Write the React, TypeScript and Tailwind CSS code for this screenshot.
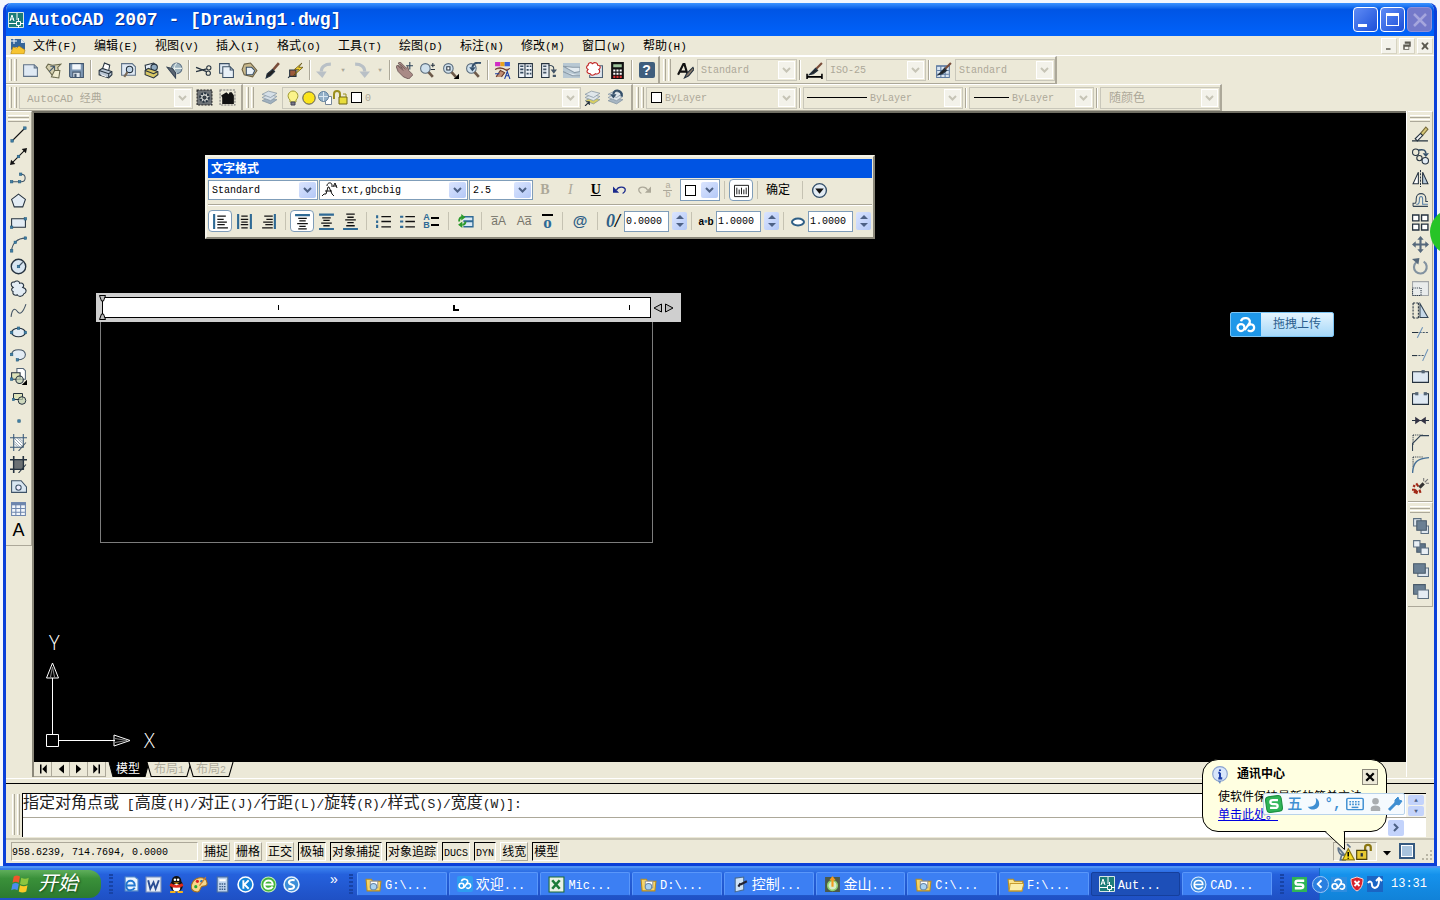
import type { ReactNode } from "react"

type Item = { label: string; icon: ReactNode } | "sep"

// Chinese runs keep the parent's size, latin runs get a smaller monospace size
function Mixed({ text, latin = "text-[10px]" }: { text: string; latin?: string }) {
  return (
    <>
      {text.split(/([\x20-\x7e]+)/).map((part, i) =>
        i % 2 ? (
          <span key={i} className={latin}>
            {part}
          </span>
        ) : (
          part
        )
      )}
    </>
  )
}

function Svg({ children, className = "size-[17px]" }: { children: ReactNode; className?: string }) {
  return (
    <svg viewBox="0 0 16 16" className={`shrink-0 ${className}`} fill="none" stroke="#25323f" strokeWidth="1" aria-hidden="true">
      {children}
    </svg>
  )
}

function Dot({ x, y }: { x: number; y: number }) {
  return <rect x={x - 1.2} y={y - 1.2} width="2.4" height="2.4" fill="#3f7fa6" stroke="#245a7c" strokeWidth=".5" />
}

function Tools({ items, vertical = false }: { items: Item[]; vertical?: boolean }) {
  return (
    <>
      {items.map((item, i) =>
        item === "sep" ? (
          <Sep key={i} />
        ) : (
          <button
            key={i}
            aria-label={item.label}
            className={vertical ? "flex h-[22px] w-full items-center justify-center" : "flex h-6 w-[23px] items-center justify-center"}
          >
            {item.icon}
          </button>
        )
      )}
    </>
  )
}

function Sep() {
  return <span className="mx-[2px] h-5 w-[2px] shrink-0 border-l border-[#aca899] bg-white" />
}

function Grip() {
  return (
    <span className="mx-[2px] flex h-full shrink-0 gap-[2px] py-[2px]">
      <span className="w-[3px] border-r border-l border-r-[#aca899] border-l-white" />
      <span className="w-[3px] border-r border-l border-r-[#aca899] border-l-white" />
    </span>
  )
}

function GripH() {
  return (
    <span className="mx-[2px] mt-[3px] mb-px flex flex-col gap-px">
      <span className="h-[3px] border-t border-b border-t-white border-b-[#aca899]" />
      <span className="h-[3px] border-t border-b border-t-white border-b-[#aca899]" />
    </span>
  )
}

function Bar({ children }: { children: ReactNode }) {
  return (
    <div className="flex h-full shrink-0 items-center border-t border-r-2 border-b border-t-white border-r-[#aca899] border-b-[#aca899] pl-px">
      {children}
    </div>
  )
}

function Arrow({ on = false }: { on?: boolean }) {
  return (
    <span
      className={
        on
          ? "pointer-events-none flex h-4 w-[17px] shrink-0 items-center justify-center rounded-xs bg-linear-to-br from-[#dbe5fe] to-[#b3c8f7]"
          : "pointer-events-none flex h-[18px] w-[17px] shrink-0 items-center justify-center border border-white bg-[#f3f2ea]"
      }
    >
      <svg viewBox="0 0 9 6" className="h-[6px] w-[9px]" fill="none" stroke={on ? "#4d6185" : "#c6c4b6"} strokeWidth="2">
        <path d="M1 1l3.500 3.500L8 1" />
      </svg>
    </span>
  )
}

function Combo({ label, value, icon, width, on = false, font = "text-[10px]" }: { label: string; value: string; icon?: ReactNode; width: string; on?: boolean; font?: string }) {
  return (
    <label
      className={`flex shrink-0 items-center border ${on ? "h-5 border-[#7f9db9] bg-white pr-px text-black" : "h-[22px] border-[#c9c7ba] pr-px text-[#aca899]"} ${width}`}
    >
      {icon}
      <select aria-label={label} className={`min-w-0 flex-1 appearance-none bg-transparent pt-[2px] pl-[3px] leading-4 outline-none ${font}`}>
        <option>{value}</option>
      </select>
      <Arrow on={on} />
    </label>
  )
}

const swatch = <span className="ml-1 size-[11px] shrink-0 border border-black bg-white" />

const printer = (
  <>
    <path d="M5 7l2-6 5 2-1 5" fill="#fff" />
    <path d="M2 8l3-2 9 3v3l-3 3-9-3z" fill="#b9c6d4" />
    <path d="M2 8l9 3 3-2M11 11v3" />
    <path d="M4 12l5 2" stroke="#fff" />
  </>
)

const standardTools: Item[] = [
  { label: "新建", icon: <Svg><path d="M1.500 2.500h10l3 3v8h-13z" fill="#dfe9f3" stroke="#5f7286" /><path d="M11.500 2.500v3h3" stroke="#5f7286" /></Svg> },
  { label: "打开", icon: <Svg><path d="M1 5l2-3 4 1 8-1-3 3 1 5-5 4z" fill="#d5cfae" stroke="#6b6a4e" /><path d="M4 9l5-5M5 4h4v4" stroke="#44586c" /><path d="M6 14l3-6 5 0-1 7z" fill="#f0eccf" stroke="#6b6a4e" /></Svg> },
  { label: "保存", icon: <Svg><path d="M1.500 1.500h13v13h-12l-1-1z" fill="#7e98b4" stroke="#41566e" /><path d="M4 2h8v5H4z" fill="#f3f7fb" stroke="none" /><path d="M4.500 9.500h7v5h-7z" fill="#dfe7ef" stroke="#41566e" /><path d="M6 11h2v3H6z" fill="#41566e" stroke="none" /></Svg> },
  "sep",
  { label: "打印", icon: <Svg>{printer}</Svg> },
  { label: "打印预览", icon: <Svg><path d="M1.500 1.500h10l3 3v8h-13z" fill="#dfe9f3" stroke="#5f7286" /><circle cx="9" cy="7" r="3" fill="#c0d4e6" /><path d="M7 9.500L4 14" stroke="#7a6a58" strokeWidth="2" /></Svg> },
  { label: "发布", icon: <Svg><path d="M2 3l8-2 3 3-2 4-8 2z" fill="#e6eef5" /><circle cx="10.500" cy="5" r="3" fill="#8fa9bf" /><path d="M2 8l3-2 9 3v3l-4 3-8-3z" fill="#d8c766" /><path d="M2 8l8 3 4-2" /></Svg> },
  { label: "三维 DWF", icon: <Svg><circle cx="10" cy="6" r="5" fill="#9fb4bf" stroke="#5f7286" /><path d="M10 1c-3 3-3 7 0 10M5 6h10" stroke="#e8f0ee" /><path d="M1 5l5 1 3 4v5z" fill="#5b6673" stroke="#394656" /></Svg> },
  "sep",
  { label: "剪切", icon: <Svg><path d="M1 5l10 4M1 9l10-2.500" strokeWidth="1.300" /><circle cx="13" cy="5.500" r="2" /><circle cx="12.500" cy="10.500" r="2" /></Svg> },
  { label: "复制", icon: <Svg><path d="M1.500 1.500h9v9h-9z" fill="#dfe9f3" stroke="#3d5166" /><path d="M4.500 4.500h7l3 3v7h-10z" fill="#e9f1f8" stroke="#3d5166" /><path d="M11.500 4.500v3h3" stroke="#3d5166" /></Svg> },
  { label: "粘贴", icon: <Svg><path d="M3 2l6-1 6 7-4 6-8-2-2-5z" fill="#c9b98d" stroke="#6e6244" /><path d="M5 5h5l3 3-2 4H5z" fill="#e9f1f8" stroke="#3d5166" /></Svg> },
  { label: "特性匹配", icon: <Svg><path d="M14 1L8 8" stroke="#7a4d3a" strokeWidth="2.500" /><path d="M8 7l2 2-4 4-4 2 1-4z" fill="#222" /></Svg> },
  { label: "块编辑器", icon: <Svg><path d="M2.500 7.500h6v6h-6z" fill="#9c5a3c" /><path d="M14 1L7 7h4l-5 6 9-8h-4z" fill="#f5d432" stroke="#5c4c10" strokeWidth=".7" /><path d="M1 15l2-2" /></Svg> },
  "sep",
]

const undoIcon = <Svg><path d="M14 2C8 2 5 5 5 9" stroke="#b9c0c6" strokeWidth="3" /><path d="M0 9h10l-4 6z" fill="#b9c0c6" stroke="none" /></Svg>
const redoIcon = <Svg><path d="M2 2c6 0 9 3 9 7" stroke="#b9c0c6" strokeWidth="3" /><path d="M6 9h10l-5 6z" fill="#b9c0c6" stroke="none" /></Svg>
const lens = <><circle cx="6" cy="6" r="4.500" fill="#cfe0ec" stroke="#5a6c7d" /><path d="M9 9.500l4 4.500" stroke="#6d5a4a" strokeWidth="2.500" /></>

const viewTools: Item[] = [
  "sep",
  { label: "平移", icon: <Svg><path d="M0 4l2-1 4 3-4-5 2-1 6 6 1-2 1 4 4 4-4 4-5-2-5-5z" fill="#a98a86" stroke="#5f4a4a" strokeWidth=".7" /><path d="M2 4l5 4M4 2l5 5" stroke="#6f5553" strokeWidth=".8" /><path d="M13 0v7M9.500 3.500h6.500" stroke="#2c4257" /></Svg> },
  { label: "实时缩放", icon: <Svg>{lens}<path d="M13 1v4M11 3h4M11 7h4" /></Svg> },
  { label: "窗口缩放", icon: <Svg>{lens}<path d="M4.500 4.500h3v3h-3z" fill="#fff" /><path d="M16 11v5h-5z" fill="#000" stroke="none" /></Svg> },
  { label: "缩放上一个", icon: <Svg>{lens}<path d="M15 1C10 0 7 2 7 5" stroke="#35506a" strokeWidth="2" /><path d="M4 5h6l-3 4z" fill="#35506a" stroke="none" /></Svg> },
  "sep",
  { label: "特性", icon: <Svg><path d="M1 0h5v4H1z" fill="#d22cc4" stroke="none" /><path d="M6 0h4v4H6z" fill="#e9a31c" stroke="none" /><path d="M10 0h5v4h-5z" fill="#3d62d8" stroke="none" /><path d="M1 7c3-2 7-2 11 1l3-2M2 14l4-6 4 2-3 4" fill="#c08e72" stroke="#6b3b2c" /><path d="M10 16l2.500-7L15 16M11 13h3M1 11h4" stroke="#1a3da0" /></Svg> },
  { label: "设计中心", icon: <Svg><path d="M1.500 1.500h13v13h-13zM7.500 2v12" fill="#edf2f7" /><path d="M3 4h3M3 7h3M3 10h3M9 4h2M12 4h1.500M9 7.500h2M12 7.500h1.500M9 11h2M12 11h1.500" strokeWidth="1.600" stroke="#34495e" /></Svg> },
  { label: "工具选项板", icon: <Svg><path d="M1.500 1.500h7v13h-7z" fill="#e7edf3" /><path d="M3 4h3M3 7h3M3 10h3" strokeWidth="1.600" stroke="#456" /><path d="M8 3c5 0 5 2 5 5" stroke="#345" /><path d="M10 7h6l-3 4zM12 12h3v2h-3z" fill="#456" stroke="none" /></Svg> },
  { label: "图纸集管理器", icon: <Svg><path d="M0 1h16v14H0z" fill="#b8c8d3" stroke="none" /><path d="M0 4l11 6 5-1V5H9zM0 9l9 4h7" fill="#e3ebf0" stroke="#8b9ba8" /></Svg> },
  { label: "标记集管理器", icon: <Svg><path d="M13 3.500h2.500v11h-12V12" fill="#dde6ee" stroke="#4d6175" /><path d="M2 3c0-3 4-3 4-1 1-2 5-2 5 1 3 0 3 3 1 4 2 2 0 5-3 4-2 2-4 2-5 0-3 0-4-2-2-4-2-1-2-3 0-4z" fill="#fff" stroke="#c02020" /></Svg> },
  { label: "快速计算器", icon: <Svg><path d="M2 0h12v16H2z" fill="#111" stroke="none" /><path d="M4 2h8v3H4z" fill="#9fc49b" stroke="none" /><path d="M4 8h8M4 11h8" stroke="#fff" strokeDasharray="2 1" strokeWidth="2" /><path d="M4 14h8" stroke="#d33" strokeDasharray="2 1" strokeWidth="2" /></Svg> },
  "sep",
  { label: "帮助", icon: <span className="flex size-4 items-center justify-center rounded-xs bg-[#3f5e7d] font-['Liberation_Sans',sans-serif] text-sm leading-4 font-bold text-white">?</span> },
]

const brush = <><path d="M15 1L9 7" stroke="#7a4d3a" strokeWidth="2" /><path d="M9 6l2 2-4 3-4 1 3-3z" fill="#222" /></>
const sheets = (top: string, bottom: string) => (
  <>
    <path d="M1 11l6-3 8 2-6 4z" fill={bottom} stroke="#8494a2" strokeWidth=".7" />
    <path d="M1 8l6-3 8 2-6 4z" fill={top} stroke="#8494a2" strokeWidth=".7" />
    <path d="M1 5l6-3 8 2-6 4z" fill={top} stroke="#8494a2" strokeWidth=".7" />
  </>
)

const drawTools: Item[] = [
  { label: "直线", icon: <Svg><path d="M2 14L14 2" strokeWidth="1.300" stroke="#111" /><Dot x={2} y={14} /><Dot x={14} y={2} /></Svg> },
  { label: "构造线", icon: <Svg><path d="M2 14L14 2" stroke="#111" /><path d="M0 16l1-5 4 4zM16 0l-1 5-4-4z" fill="#111" stroke="none" /><Dot x={8} y={8} /></Svg> },
  { label: "多段线", icon: <Svg><path d="M1.500 11h9c5 0 5-7 0-7" stroke="#456" /><Dot x={1.500} y={11} /><Dot x={9} y={11} /><Dot x={10} y={4} /></Svg> },
  { label: "正多边形", icon: <Svg><path d="M8 2l6.500 5-2.500 7H4L1.500 7z" fill="#e3ecf4" /></Svg> },
  { label: "矩形", icon: <Svg><path d="M1.500 4.500h13v8h-13z" fill="#e3ecf4" /><Dot x={1.500} y={12.500} /><Dot x={14.500} y={4.500} /></Svg> },
  { label: "圆弧", icon: <Svg><path d="M1.500 14C2 7 7 2 14.500 2" stroke="#456" /><Dot x={1.500} y={14} /><Dot x={5} y={6} /><Dot x={14.500} y={2} /></Svg> },
  { label: "圆", icon: <Svg><circle cx="8" cy="8" r="6.800" fill="#d9e6f1" strokeWidth="1.300" /><path d="M8 8l4-4" stroke="#456" /><Dot x={8} y={8} /></Svg> },
  { label: "修订云线", icon: <Svg><path d="M3 7C0 5 1 1 4 2c2-2 5-1 5 1 3-1 5 2 3 4 4 1 4 5 1 6-1 3-5 3-6 1-3 1-5-1-4-3-2-1-2-3 0-4z" fill="#e3ecf4" /></Svg> },
  { label: "样条曲线", icon: <Svg><path d="M1 14c1-9 4-8 6-5s5 2 8-7" stroke="#456" /></Svg> },
  { label: "椭圆", icon: <Svg><ellipse cx="8" cy="8" rx="6.500" ry="4" fill="#e3ecf4" /><Dot x={1.500} y={8} /><Dot x={8} y={4} /><Dot x={14.500} y={8} /></Svg> },
  { label: "椭圆弧", icon: <Svg><path d="M1.500 8C2 2 14 2 14.500 8c0 3-3 5-7 5" fill="#e3ecf4" stroke="#456" /><Dot x={1.500} y={8} /><Dot x={7} y={13} /></Svg> },
  { label: "插入块", icon: <Svg><path d="M6.500.5h6l2 2v8h-8z" fill="#fff" stroke="#567" /><path d="M1.500 4.500h8v6h-8z" fill="#dde2b8" /><circle cx="9" cy="11" r="3.500" fill="#c3d1b4" fillOpacity=".7" /><path d="M16 11v5h-5z" fill="#000" stroke="none" /><Dot x={1.500} y={10.500} /></Svg> },
  { label: "创建块", icon: <Svg className="size-4"><path d="M2.500 3.500h9v6h-9z" fill="#dde2b8" /><circle cx="11" cy="10.500" r="3.800" fill="#c3d1b4" fillOpacity=".7" /><Dot x={2.500} y={9.500} /></Svg> },
  { label: "点", icon: <Svg><Dot x={8.500} y={8.500} /></Svg> },
  { label: "图案填充", icon: <Svg><path d="M4 4h8v8H4z" fill="#fff" stroke="none" /><path d="M4 4l8 8M4 7l5 5M7 4l5 5M9 4l3 3M4 9l3 3" stroke="#789" strokeWidth=".7" /><path d="M0 3.500h16M0 12.500h13M3.500 0v16M12.500 0v13" stroke="#3a5a7a" /><path d="M15 8l-7 8" stroke="#456" /></Svg> },
  { label: "渐变色", icon: <Svg><path d="M4 4h8v8H4z" fill="#6b7073" stroke="none" /><path d="M0 3.500h16M0 12.500h13M3.500 0v16M12.500 0v13" strokeWidth="1.500" /><path d="M15 8l-7 8" /></Svg> },
  { label: "面域", icon: <Svg><path d="M1.500 2.500h9l5 6v5h-14z" fill="#d9e6f1" stroke="#3e5267" /><circle cx="8" cy="9" r="2.500" fill="#eef" stroke="#3e5267" /></Svg> },
  { label: "表格", icon: <Svg><path d="M1.500 2.500h13v12h-13z" fill="#f2f6fb" stroke="#6e86ad" /><path d="M1 3.500h14" stroke="#6e86ad" strokeWidth="3" /><path d="M2 8h12M2 11.500h12M5.500 4v10M10 4v10" stroke="#6e86ad" /></Svg> },
  { label: "多行文字", icon: <span className="font-['Liberation_Sans',sans-serif] text-lg leading-5 text-black">A</span> },
]

const modifyTools: Item[] = [
  { label: "删除", icon: <Svg><path d="M0 14h15" /><path d="M8 7l5-6 2 2-5 6z" fill="#d8c878" stroke="#776b3a" /><path d="M3 12l5-5 2 2-5 5z" fill="#f3f3f3" /></Svg> },
  { label: "复制对象", icon: <Svg><circle cx="3.500" cy="4" r="3" /><circle cx="7" cy="9.500" r="2.500" /><circle cx="12.500" cy="12" r="3" fill="#e3ecf4" /><path d="M6 2c5-1 7 0 7 3" stroke="#35506a" strokeWidth="1.500" /><path d="M10 5h6l-3 3.500z" fill="#35506a" stroke="none" /></Svg> },
  { label: "镜像", icon: <Svg><path d="M6 2v11H1z" fill="#fff" /><path d="M10 2v11h5z" fill="#b8cbdc" /><path d="M8 0v16" strokeDasharray="2 1" /></Svg> },
  { label: "偏移", icon: <Svg><path d="M1 13.500h14M1 13.500v-3h2C4 10 4 8 4 6c0-6 9-6 9 0v3h2" stroke="#345" /><path d="M4 11.500h1c2 0 2-2 2-5 0-3 3-3 3 0v5h5" stroke="#567fa6" /></Svg> },
  { label: "阵列", icon: <Svg><path d="M.5 1h6v5.500h-6zM9 1h6v5.500H9zM.5 9.500h6V15h-6zM9 9.500h6V15H9z" fill="#fff" strokeWidth="1.300" /></Svg> },
  { label: "移动", icon: <Svg><path d="M8 2v12M2 8h12" stroke="#55687b" strokeWidth="2" /><path d="M8 0l3 3.500H5zM8 16l3-3.500H5zM0 8l3.500-3v6zM16 8l-3.500-3v6z" fill="#55687b" stroke="none" /></Svg> },
  { label: "旋转", icon: <Svg><path d="M4 4a6 6 0 1 0 7-.5" stroke="#8292a0" strokeWidth="2" /><path d="M0 1l7-1-1 6z" fill="#55687b" stroke="none" /></Svg> },
  { label: "缩放", icon: <Svg><path d="M.5 1.500h15v13H.5z" fill="#e9ecec" stroke="#a2a6a8" /><path d="M.5 7.500h8v7h-8z" strokeDasharray="1 1" /></Svg> },
  { label: "拉伸", icon: <Svg><path d="M1 1v14M6 1v14M1 1h5M1 15h5" strokeDasharray="2 1" /><path d="M7.500 1.500L15 14.500H7.500z" fill="#c6d8e8" stroke="#345" /></Svg> },
  { label: "修剪", icon: <Svg><path d="M0 8h6" /><path d="M7 8h9" strokeDasharray="2 1" stroke="#456" /><path d="M10 3L5 13" stroke="#6c93ba" /></Svg> },
  { label: "延伸", icon: <Svg><path d="M0 9h5" /><path d="M6 9h6" strokeDasharray="2 1" stroke="#456" /><path d="M15 3l-5 11" stroke="#6c93ba" /></Svg> },
  { label: "打断于点", icon: <Svg><path d="M.5 3.500h15v10H.5z" fill="#dfe9f3" /><rect x="9" y="2" width="3" height="3" fill="#567" stroke="none" /></Svg> },
  { label: "打断", icon: <Svg><path d="M4 3.500H.5v10h15v-10H12" fill="#dfe9f3" /><rect x="3" y="2" width="3" height="3" fill="#567" stroke="none" /><rect x="11" y="2" width="3" height="3" fill="#567" stroke="none" /></Svg> },
  { label: "合并", icon: <Svg><path d="M0 8h16" /><path d="M3 4.500L8 8l-5 3.500zM13 4.500L8 8l5 3.500z" fill="#334" stroke="none" /></Svg> },
  { label: "倒角", icon: <Svg><path d="M1 1h9M1 1v9" strokeDasharray="1 1" /><path d="M.5 16V9L8 1.500h8" stroke="#345" /></Svg> },
  { label: "圆角", icon: <Svg><path d="M1 1h9M1 1v9" strokeDasharray="1 1" /><path d="M.5 16C1 6 5 2 16 1.500" stroke="#456f96" strokeWidth="1.300" /></Svg> },
  { label: "分解", icon: <Svg><path d="M1 7l2 1M0 11h3M4 15l1-3M8 14l-1-3M4 5l2 3M2 14l2-3" stroke="#a12a18" strokeWidth="2" /><path d="M7 9l4-4" stroke="#333" strokeWidth="3" /><path d="M12 4l3-3M13 5h3M11 3V0" stroke="#777" /></Svg> },
]

const orderTools: Item[] = [
  { label: "前置", icon: <Svg><path d="M1.500 1.500h7v7h-7zM8.500 8.500h7v7h-7z" fill="#dfe7ef" stroke="#5d6f80" /><path d="M4.500 3.500h9v9h-9z" fill="#6a7f93" stroke="#4a5b6b" /></Svg> },
  { label: "后置", icon: <Svg><path d="M4.500 4.500h8v8h-8z" fill="#5f7488" stroke="#4a5b6b" /><path d="M1.500 1.500h6v6h-6zM8.500 8.500h7v6h-7z" fill="#e9eff5" stroke="#5d6f80" /></Svg> },
  { label: "置于对象之上", icon: <Svg><path d="M5.500 6.500h10v8h-10z" fill="#dfe7ef" stroke="#5d6f80" /><path d="M1.500 2.500h11v9h-11z" fill="#6a7f93" stroke="#4a5b6b" /></Svg> },
  { label: "置于对象之下", icon: <Svg><path d="M1.500 1.500h11v9h-11z" fill="#6a7f93" stroke="#4a5b6b" /><path d="M5.500 6.500h10v8h-10z" fill="#e6edf4" stroke="#5d6f80" /></Svg> },
]

const menus = ["文件(F)", "编辑(E)", "视图(V)", "插入(I)", "格式(O)", "工具(T)", "绘图(D)", "标注(N)", "修改(M)", "窗口(W)", "帮助(H)"]

function CadLogo({ className = "size-4" }: { className?: string }) {
  return (
    <Svg className={className}>
      <path d="M.5.5h15v15H.5z" fill="#1c7d78" stroke="#d5e6e4" />
      <path d="M2 9l2-6 2 6M3 7h3M9 1v7M1 11.500h7M12 11.500h4M10.500 13v3" stroke="#fff" />
      <path d="M8.500 9.500h4v4h-4zM10.500 6v3" stroke="#fff" fill="#1c7d78" />
    </Svg>
  )
}

function TitleBar() {
  return (
    <header className="flex h-[33px] items-center justify-between bg-linear-to-b from-[#3b93ff] via-[#0055e5] via-20% to-[#0062fb] px-[2px]">
      <div className="flex items-center gap-1">
        <CadLogo />
        <h1 className="pt-px font-['Liberation_Mono',monospace] text-[18px] leading-6 font-bold whitespace-pre text-white [text-shadow:1px_1px_#0a2f90]">AutoCAD 2007 - [Drawing1.dwg]</h1>
      </div>
      <div className="flex gap-[2px]">
        <button aria-label="最小化" className="flex size-[25px] items-end rounded-sm border border-white bg-linear-to-br from-[#5f8bf5] to-[#1c4ed8] p-1">
          <span className="h-[3px] w-[9px] bg-white" />
        </button>
        <button aria-label="最大化" className="flex size-[25px] items-center justify-center rounded-sm border border-white bg-linear-to-br from-[#5f8bf5] to-[#1c4ed8]">
          <span className="size-[13px] border border-t-[3px] border-white" />
        </button>
        <button aria-label="关闭" className="flex size-[25px] items-center justify-center rounded-sm border border-[#8f8fd6] bg-[#7479c9]">
          <Svg className="size-4"><path d="M2 2l12 12M14 2L2 14" stroke="#a5a6dd" strokeWidth="2.500" /></Svg>
        </button>
      </div>
    </header>
  )
}

function MenuBar() {
  return (
    <nav className="flex h-5 items-center justify-between border-b border-white pl-1">
      <div className="flex items-center">
        <Svg className="mr-1 size-4">
          <path d="M1 1h10l4 4v7L6 9 1 12z" fill="#35669b" stroke="none" />
          <path d="M11 1v4h4z" fill="#dfe9f3" stroke="none" />
          <path d="M1 15l2-6 4 1 2-2 6 4-1 4H1z" fill="#f7c531" stroke="#a77a12" strokeWidth=".6" />
          <path d="M4 0v6M1 3h6" stroke="#fff" />
        </Svg>
        {menus.map((m) => (
          <button key={m} className="w-[61px] pt-[2px] pl-[3px] text-left text-xs leading-[18px] whitespace-nowrap text-black">
            <Mixed text={m} latin="text-[11px]" />
          </button>
        ))}
      </div>
      <div className="flex gap-[2px] pr-px">
        {["M4 11h6v2H4z", "M5 2h8v7h-2V5H5zM3 6h8v7H3zM5 9v3h5V9z", "M3 4l2-1 3 3 3-3 2 1-3 4 3 4-2 1-3-3-3 3-2-1 3-4z"].map((d, i) => (
          <button key={i} aria-label={["最小化图形", "还原图形", "关闭图形"][i]} className="flex size-4 items-center justify-center border border-t-white border-r-[#d6d3c2] border-b-[#d6d3c2] border-l-white bg-[#f3f2ea]">
            <svg viewBox="0 0 16 16" className="size-3" fill="#5c5a50" fillRule="evenodd"><path d={d} /></svg>
          </button>
        ))}
      </div>
    </nav>
  )
}

function TopToolbars() {
  return (
    <>
      <div className="flex h-7">
        <Bar>
          <Grip />
          <Tools items={standardTools} />
          <Tools items={[{ label: "放弃", icon: undoIcon }]} />
          <button aria-label="放弃列表" className="w-[14px] text-[6px] text-[#aca899]">▼</button>
          <Tools items={[{ label: "重做", icon: redoIcon }]} />
          <button aria-label="重做列表" className="w-[14px] text-[6px] text-[#aca899]">▼</button>
          <Tools items={viewTools} />
        </Bar>
        <Bar>
          <Grip />
          <button aria-label="文字样式" className="flex w-6 justify-center"><Svg><path d="M1 12L6 2h1l3 10M3 9h6" strokeWidth="2" stroke="#111" /><path d="M15 5l-6 6-2 4 4-2 5-6z" fill="#8b7b6b" /></Svg></button>
          <Combo label="文字样式" value="Standard" width="w-[100px]" />
          <Sep />
          <button aria-label="标注样式" className="flex w-[23px] justify-center"><Svg>{brush}<path d="M1 14h14M1 11v5M15 11v5" stroke="#000" strokeWidth="1.500" /></Svg></button>
          <Combo label="标注样式" value="ISO-25" width="w-[100px]" />
          <Sep />
          <button aria-label="表格样式" className="flex w-[23px] justify-center"><Svg><path d="M1.500 3.500h12v11h-12z" fill="#d8e4f0" stroke="#5d7aa0" /><path d="M1.500 4h12M2 8h11M2 11.500h11M5.500 4v10M9.500 4v10" stroke="#5d7aa0" />{brush}</Svg></button>
          <Combo label="表格样式" value="Standard" width="w-[100px]" />
        </Bar>
      </div>
      <div className="flex h-[27px]">
        <Bar>
          <Grip />
          <Combo label="工作空间" value="AutoCAD 经典" width="w-[174px] pl-1" font="text-[11px]" />
          <Tools
            items={[
              { label: "工作空间设置", icon: <Svg><path d="M1 1h14v14H1z" fill="#6e7377" stroke="#222" strokeDasharray="2 1" /><circle cx="8" cy="8" r="4" fill="#e5e5e0" strokeWidth="2" strokeDasharray="2 1" /><circle cx="8" cy="8" r="1.500" fill="#444" /></Svg> },
              { label: "我的工作空间", icon: <Svg><path d="M1 1h14v14H1z" stroke="#777" strokeDasharray="2 1" /><path d="M2 6l5-3 2 2 1-2h2l2 3v8H3V8z" fill="#111" stroke="none" /></Svg> },
            ]}
          />
          <span className="w-[2px]" />
        </Bar>
        <Bar>
          <Grip />
          <button aria-label="图层特性管理器" className="flex w-[26px] justify-center"><Svg>{sheets("#d5dfe7", "#9fb0be")}</Svg></button>
          <Combo
            label="图层"
            value="0"
            width="w-[299px]"
            icon={
              <span className="flex shrink-0 items-center pl-[2px]">
                <Svg className="size-4"><path d="M5 10C1 6 4 1 8 1s7 5 3 9v2H5z" fill="#fbf38a" stroke="#a09a30" /><path d="M6 12h4v3H6z" fill="#778" stroke="#445" /></Svg>
                <Svg className="size-4"><circle cx="8" cy="8" r="6.200" fill="#fbe41c" stroke="#555" /></Svg>
                <Svg className="size-4"><path d="M8.500 6.500h6v8h-6z" fill="#fff" stroke="#789" /><circle cx="6.500" cy="6.500" r="5" fill="#93b0c8" stroke="#5f7f9d" /><path d="M6.500 2v9M2 6.500h9" stroke="#dbe8f2" /></Svg>
                <Svg className="size-4"><path d="M1 9V4c0-4 6-4 6 0v3" stroke="#9a8f1e" strokeWidth="2" /><path d="M6 7h8v7H6z" fill="#e8dc3b" stroke="#6e6714" /><path d="M10 4h3v3" stroke="#9a8f1e" /></Svg>
                <span className="ml-[2px] size-[11px] border border-black bg-white" />
              </span>
            }
          />
          <Tools
            items={[
              { label: "将对象的图层置为当前", icon: <Svg>{sheets("#dfe6ea", "#d8cf62")}<path d="M1 16l4-4M2 12h3v3" /></Svg> },
              { label: "上一个图层", icon: <Svg>{sheets("#dfe6ea", "#a6b5c2")}<path d="M14 7C14 0 6 0 6 5" stroke="#35506a" strokeWidth="2" /><path d="M3 5h6l-3 4z" fill="#35506a" stroke="none" /></Svg> },
            ]}
          />
          <span className="w-1" />
        </Bar>
        <Bar>
          <Grip />
          <Combo label="颜色" value="ByLayer" width="w-[151px]" icon={swatch} />
          <Sep />
          <Combo label="线型" value="ByLayer" width="w-[160px]" icon={<span className="ml-[3px] h-px w-[60px] shrink-0 bg-black" />} />
          <Sep />
          <Combo label="线宽" value="ByLayer" width="w-[125px]" icon={<span className="ml-1 h-px w-[35px] shrink-0 bg-black" />} />
          <Sep />
          <Combo label="打印样式" value="随颜色" width="w-[120px] pl-[5px]" font="text-xs" />
        </Bar>
      </div>
    </>
  )
}

const lines = (xs: string, bar: string) => (
  <Svg>
    <path d={xs} stroke="#111" strokeWidth="1.200" />
    <path d={bar} stroke="#2f6a95" strokeWidth="2" />
  </Svg>
)

function Toggle({ label, on = false, children }: { label: string; on?: boolean; children: ReactNode }) {
  return (
    <button aria-label={label} className={`flex h-[22px] w-6 shrink-0 items-center justify-center ${on ? "rounded-sm border border-[#7f9db9] bg-white" : ""}`}>
      {children}
    </button>
  )
}

function Spin({ label, value }: { label: string; value: string }) {
  return (
    <span className="flex shrink-0 items-center gap-[3px]">
      <input aria-label={label} defaultValue={value} className="h-[21px] w-[45px] border border-[#7f9db9] bg-white pl-px text-[10px] text-black outline-none" />
      <span className="flex h-[18px] w-[15px] flex-col items-center justify-around rounded-xs bg-linear-to-br from-[#dbe5fe] to-[#b3c8f7]">
        <button aria-label={`增大${label}`}><svg viewBox="0 0 8 5" className="h-[5px] w-2"><path d="M0 5l4-4 4 4z" fill="#4d6185" /></svg></button>
        <button aria-label={`减小${label}`}><svg viewBox="0 0 8 5" className="h-[5px] w-2"><path d="M0 0l4 4 4-4z" fill="#4d6185" /></svg></button>
      </span>
    </span>
  )
}

function VSep() {
  return <span className="mx-1 h-[18px] w-px shrink-0 bg-[#c5c2b2]" />
}

function TextFormat() {
  return (
    <section aria-label="文字格式" className="absolute top-[42px] left-[171px] flex h-[84px] w-[670px] flex-col border-2 border-t-[#f5f4ea] border-r-[#8b887a] border-b-[#8b887a] border-l-[#f5f4ea] bg-[#ece9d8] p-px pt-[2px]">
      <h2 className="h-[19px] bg-[#0054e3] pt-px pl-[3px] text-xs leading-5 font-bold text-white">文字格式</h2>
      <div className="flex h-6 items-center">
        <Combo on label="样式" value="Standard" width="w-[110px]" />
        <Combo
          on
          label="字体"
          value="txt,gbcbig"
          width="ml-px w-[149px]"
          icon={<Svg className="ml-[2px] size-4"><path d="M0 14l2-2h2l2-7h1l3 7 2 2M3 9h7M5 4c0-4 5-4 5-1v2M11 5l2-4 2 5M12 4h3" stroke="#111" /></Svg>}
        />
        <Combo on label="文字高度" value="2.5" width="ml-px w-[64px]" />
        <div className="flex w-[143px] items-center justify-between pl-1 font-['Liberation_Serif',serif] text-sm">
          <button className="w-4 font-bold text-[#aca899]">B</button>
          <button className="w-4 text-[#aca899] italic">I</button>
          <button className="w-4 font-bold text-black underline">U</button>
          <button aria-label="放弃"><Svg className="size-[14px]"><path d="M4 8c2-5 10-4 10 0 0 2-1 3-3 4" stroke="#1b2a8c" strokeWidth="1.500" /><path d="M0 4v7h7z" fill="#1b2a8c" stroke="none" /></Svg></button>
          <button aria-label="重做"><Svg className="size-[14px]"><path d="M12 8C10 3 2 4 2 8c0 2 1 3 3 4" stroke="#aca899" strokeWidth="1.500" /><path d="M16 4v7H9z" fill="#aca899" stroke="none" /></Svg></button>
          <button aria-label="堆叠" className="flex w-4 flex-col items-center font-['Liberation_Sans',sans-serif] text-[9px] leading-[7px] text-[#aca899]">
            <span>a</span>
            <span className="mt-px w-[9px] border-t border-[#aca899]">b</span>
          </button>
        </div>
        <button aria-label="颜色" className="ml-1 flex h-[22px] w-10 shrink-0 items-center justify-between border border-[#7f9db9] bg-white pr-px">
          {swatch}
          <Arrow on />
        </button>
        <VSep />
        <Toggle label="标尺" on>
          <Svg className="size-[15px]"><path d="M.5 2.500h15v12H.5z" stroke="#111" /><path d="M3 5v7M5.500 7v5M8 5v7M10.500 7v5M13 5v7" stroke="#111" /></Svg>
        </Toggle>
        <VSep />
        <button className="px-1 pt-[2px] text-xs text-black">确定</button>
        <span className="w-1" />
        <VSep />
        <button aria-label="选项" className="ml-1"><Svg><circle cx="8" cy="8" r="6.500" fill="#e3ecf4" stroke="#35506a" strokeWidth="1.300" /><path d="M4 6h8l-4 5z" fill="#111" stroke="none" /></Svg></button>
      </div>
      <div className="mt-[2px] border-t border-b border-t-[#aca899] border-b-white" />
      <div className="flex flex-1 items-center">
        <Toggle label="左对齐" on>{lines("M5 3h8M5 6h6M5 8.500h9M5 11h7M5 14h10", "M2 1v14")}</Toggle>
        <Toggle label="居中对齐">{lines("M5 3h6M4.500 6h7M5 8.500h6M4.500 11h7M5 14h6", "M2 1v14M14 1v14")}</Toggle>
        <Toggle label="右对齐">{lines("M4 3h8M6 6h6M3 8.500h9M5 11h7M2 14h10", "M14 1v14")}</Toggle>
        <span className="w-px" />
        <VSep />
        <Toggle label="上对齐" on>{lines("M4 5h8M5 7.500h6M3 10h10M5 12.500h6M4 15h8", "M1 2h14")}</Toggle>
        <Toggle label="中央对齐">{lines("M4 4.500h8M5 7h6M3 9.500h10M5 12h6", "M1 1.500h14M1 15h14")}</Toggle>
        <Toggle label="下对齐">{lines("M4 1h8M5 4h6M3 6.500h10M5 9h6M4 12h8", "M1 15h14")}</Toggle>
        <VSep />
        <Toggle label="编号">{lines("M6 3.500h9M6 8h9M6 13h9", "M2 2v3M2 7v2.500M2 11v3")}</Toggle>
        <Toggle label="项目符号">{lines("M6 3.500h9M6 8h9M6 13h9", "M1 3.500h3M1 8h3M1 13h3")}</Toggle>
        <Toggle label="大写字母">
          <span className="flex items-center gap-px font-['Liberation_Sans',sans-serif] text-[9px] leading-2 font-bold text-[#2f6a95]">
            <span className="flex flex-col"><span>A</span><span>B</span></span>
            <span className="flex flex-col gap-[5px]"><span className="h-[2px] w-2 bg-black" /><span className="h-[2px] w-2 bg-black" /></span>
          </span>
        </Toggle>
        <span className="w-px" />
        <VSep />
        <Toggle label="插入字段"><Svg><path d="M6 3.500h9v4H6M6 8h9v5H6" fill="#d8e8f5" stroke="#2f6a95" strokeWidth="1.300" /><path d="M2 8c0-3 1-4 3-4M8 8c0 2-1 3-3 3" stroke="#2c9a2c" strokeWidth="1.800" /><path d="M4 1l4 3-4 3zM5 8l-4 3 4 3z" fill="#2c9a2c" stroke="none" /></Svg></Toggle>
        <VSep />
        <div className="flex w-[72px] justify-around font-['Liberation_Sans',sans-serif] text-xs text-[#77756b]">
          <button>a̅A</button>
          <button>Aa̅</button>
          <button aria-label="上划线" className="mt-px border-t-2 border-black px-px font-['Liberation_Serif',serif] text-[17px] leading-3 font-bold text-[#2f6a95]">o</button>
        </div>
        <VSep />
        <button aria-label="符号" className="w-[26px] font-['Liberation_Sans',sans-serif] text-[15px] leading-4 font-bold text-[#2f5f86]">@</button>
        <VSep />
        <span className="w-[22px] text-center font-['Liberation_Serif',serif] text-lg leading-5 font-bold text-[#2f5f86] italic">0<span className="text-black">/</span></span>
        <Spin label="倾斜角度" value="0.0000" />
        <VSep />
        <span className="w-5 text-center font-['Liberation_Sans',sans-serif] text-[10px] font-bold text-black">a<span className="text-[#2f6a95]">•</span>b</span>
        <Spin label="追踪" value="1.0000" />
        <VSep />
        <span className="flex w-5 justify-center"><Svg className="size-4"><ellipse cx="8" cy="9" rx="6" ry="3.500" stroke="#2f5f86" strokeWidth="2" fill="#fff" /></Svg></span>
        <Spin label="宽度比例" value="1.0000" />
      </div>
    </section>
  )
}

function MTextBox() {
  return (
    <div className="absolute top-[180px] left-[62px] w-[585px]">
      <div className="flex h-[29px] items-center bg-[#cfcfcf] pl-[6px]">
        <div className="relative flex h-[21px] w-[549px] items-center border border-black bg-white text-black">
          <span className="ml-[175px] h-[5px] w-px bg-black" />
          <span className="ml-[174px] size-[6px] border-b-2 border-l-2 border-black" />
          <span className="ml-[170px] h-[5px] w-px bg-black" />
          <svg viewBox="0 0 7 25" className="absolute -top-[3px] -left-1 h-[25px] w-[7px]" fill="#bbb" stroke="#000">
            <path d="M.5.5h6L4.500 6h-2zM2.500 19h2l2 5.500h-6z" />
          </svg>
        </div>
        <svg viewBox="0 0 22 10" className="ml-[2px] h-[10px] w-[22px]" fill="#bbb" stroke="#000">
          <path d="M8.500 1v8L1 5zM12.500 1v8L20 5z" />
        </svg>
      </div>
      <div className="ml-1 h-[221px] w-[553px] border border-t-0 border-[#7c7c7c]" />
    </div>
  )
}

function Canvas() {
  return (
    <main className="relative min-h-0 flex-1 overflow-hidden bg-black">
      <TextFormat />
      <MTextBox />
      <svg viewBox="0 0 124 124" className="absolute bottom-[6px] left-2 size-[124px]" fill="none" stroke="#fff">
        <path d="M4.500 102.500h12v12h-12zM10.500 102V46M17 108.500h56" />
        <path d="M10.500 31l-6 15h12zM88 108.500l-16-5.500v11z" />
        <path d="M8.500 45l2-10 2 10M73 106.500l12 2-12 2" stroke="#888" />
        <text x="7" y="18" fill="#fff" stroke="none" className="font-['Open_Sans','Noto_Sans',sans-serif] text-xl font-light">Y</text>
        <text x="102" y="116" fill="#fff" stroke="none" className="font-['Open_Sans','Noto_Sans',sans-serif] text-xl font-light">X</text>
      </svg>
      <button className="absolute top-[199px] right-[72px] flex h-[25px] w-[104px] overflow-hidden rounded-xs border border-[#7cc4f3] bg-linear-to-b from-[#e4f4fe] to-[#a6d8f8] text-xs text-[#2b5f8f]">
        <span className="flex h-full w-[30px] items-center justify-center bg-[#1f97e8]">
          <CloudMark className="size-5" />
        </span>
        <span className="flex-1 leading-6">拖拽上传</span>
      </button>
    </main>
  )
}

function CloudMark({ className }: { className: string }) {
  return (
    <Svg className={className}>
      <circle cx="4" cy="10" r="2.800" stroke="#fff" strokeWidth="1.800" />
      <path d="M4 5C5 1 12 2 11 6L7 12M9.500 8.500c2-2 5-1 5 1.500s-3 4-5 2" stroke="#fff" strokeWidth="1.800" />
    </Svg>
  )
}

function SheetTabs() {
  return (
    <div className="flex h-[15px] items-stretch">
      {["M4 2h2v12H4zM13 2v12L7 8z", "M12 2v12L5 8z", "M4 2v12l7-6z", "M10 2h2v12h-2zM3 2v12l6-6z"].map((d, i) => (
        <button key={i} aria-label={["第一个", "上一个", "下一个", "最后一个"][i]} className="flex w-[18px] items-center justify-center border-r border-b border-[#aca899]">
          <svg viewBox="0 0 16 16" className="size-3"><path d={d} /></svg>
        </button>
      ))}
      <div role="tablist" className="ml-1 flex text-xs leading-4">
        {["模型", "布局1", "布局2"].map((t, i) => (
          <button
            key={t}
            role="tab"
            aria-selected={i === 0}
            className={`relative flex items-start px-1 ${i === 0 ? "w-[38px] text-white" : "w-[42px] text-[#b0ad9d]"}`}
          >
            <svg viewBox="0 0 40 14" preserveAspectRatio="none" className="absolute inset-0 size-full overflow-visible" fill={i === 0 ? "#000" : "#ece9d8"} stroke="#000">
              <path d="M-1 0l4 13.500h34L41 0" />
            </svg>
            <span className="relative pl-[2px] whitespace-nowrap">
              <Mixed text={t} />
            </span>
          </button>
        ))}
      </div>
    </div>
  )
}

function CommandLine() {
  return (
    <section className="mt-px border-t border-white">
      <div className="mt-1 flex border-t border-black pt-[9px] pr-2">
        <span className="flex h-[43px] w-4 gap-[2px] py-px pl-[6px]">
          <span className="w-[3px] border-r border-l border-r-[#aca899] border-l-white" />
          <span className="w-[3px] border-r border-l border-r-[#aca899] border-l-white" />
        </span>
        <div className="flex h-[44px] min-w-0 flex-1 flex-col border-t border-l border-black bg-white">
          <div className="flex h-[24px] justify-between border-b border-[#aca899]">
            <p className="font-['Liberation_Mono','Noto_Sans_CJK_SC',monospace] text-base leading-5 whitespace-pre text-[#222]">
              <Mixed text="指定对角点或 [高度(H)/对正(J)/行距(L)/旋转(R)/样式(S)/宽度(W)]:" latin="text-[13px]" />
            </p>
            <span className="flex w-5 flex-col items-center gap-px bg-[#f4f3ea] pt-px text-[6px] leading-[9px] text-[#4d6185]">
              <button aria-label="向上滚动" className="h-[10px] w-4 rounded-xs bg-[#c3d3fb]">▲</button>
              <button aria-label="向下滚动" className="h-[10px] w-4 rounded-xs bg-[#c3d3fb]">▼</button>
            </span>
          </div>
          <div className="flex flex-1 items-center pr-[22px]">
            <input aria-label="命令" className="h-4 min-w-0 flex-1 outline-none" />
            <button aria-label="向右滚动" className="flex size-4 items-center justify-center rounded-xs bg-[#c3d3fb]">
              <svg viewBox="0 0 6 9" className="h-[9px] w-[6px]" fill="none" stroke="#4d6185" strokeWidth="2"><path d="M1 1l3.500 3.500L1 8" /></svg>
            </button>
          </div>
        </div>
      </div>
    </section>
  )
}

const modes: [string, boolean][] = [
  ["捕捉", false],
  ["栅格", false],
  ["正交", false],
  ["极轴", true],
  ["对象捕捉", true],
  ["对象追踪", true],
  ["DUCS", true],
  ["DYN", true],
  ["线宽", false],
  ["模型", true],
]

function StatusBar() {
  return (
    <footer className="mt-px flex h-[25px] items-center border-t-2 border-[#c9c6b5] pr-px pl-[5px]">
      <output className="h-[19px] w-[187px] border border-[#aca899] border-r-white border-b-white text-[10px] leading-5 whitespace-pre text-black">958.6239, 714.7694, 0.0000</output>
      <div className="ml-1 flex gap-1">
        {modes.map(([name, on]) => (
          <button
            key={name}
            aria-pressed={on}
            className={`h-[19px] border px-px pt-px text-xs leading-[18px] whitespace-nowrap text-black ${on ? "border-t-black border-r-white border-b-white border-l-black" : "border-t-white border-r-[#aca899] border-b-[#aca899] border-l-white"}`}
          >
            <Mixed text={name} />
          </button>
        ))}
      </div>
      <div className="ml-auto flex items-center">
        <span className="flex h-[19px] w-11 items-center justify-between border border-[#aca899] border-r-white border-b-white px-[3px]">
          <Svg className="size-[18px]"><path d="M1 4l6 7M1 4c0 5 2 7 6 7M4 11l-1 4h5M9 1l3 3" stroke="#60758b" strokeWidth="1.500" /><path d="M10 5l5.500 10H5z" fill="#f8dc25" stroke="#8a7610" /><path d="M10 8v4M10 13v1" stroke="#000" strokeWidth="1.400" /></Svg>
          <Svg className="size-[18px]"><path d="M9 7V4c0-3 5-3 5 0v3" stroke="#8a7610" strokeWidth="2" /><path d="M1.500 6.500h9v8h-9z" fill="#e6c832" stroke="#4a3f08" /><path d="M6 9v3" strokeWidth="2" /></Svg>
        </span>
        <button aria-label="状态栏菜单" className="flex w-5 justify-center pt-1"><svg viewBox="0 0 8 5" className="h-[5px] w-2"><path d="M0 0h8L4 4.500z" /></svg></button>
        <button aria-label="全屏显示" className="ml-[2px] mb-[2px] size-4 border-2 border-[#35597e] bg-[#a9c4dd] shadow-[inset_0_0_0_1px_#fff]" />
        <svg viewBox="0 0 12 12" className="ml-[6px] h-3 w-3 self-end" fill="#b8b5a4"><path d="M9 1h2v2H9zM9 5h2v2H9zM5 5h2v2H5zM9 9h2v2H9zM5 9h2v2H5zM1 9h2v2H1z" /></svg>
      </div>
    </footer>
  )
}

function Balloon() {
  return (
    <aside className="absolute right-[53px] bottom-[68px] h-[73px] w-[185px] rounded-[16px] border border-black bg-[#ffffe1] text-xs text-black">
      <div className="flex h-[29px] items-center pr-2 pl-2">
        <Svg className="size-[18px]"><circle cx="8" cy="7" r="6.500" fill="#d8e6fb" stroke="#8aa2cf" /><path d="M6 13l2 3 1-3z" fill="#6d8fc4" stroke="none" /><path d="M8 6v5M6.500 6H8M6.500 11h3.500M8 3v1.500" stroke="#1d3fa8" strokeWidth="1.800" /></Svg>
        <h2 className="ml-2 flex-1 font-bold">通讯中心</h2>
        <button aria-label="关闭" className="mt-1 flex size-4 items-center justify-center border border-[#8b887a] bg-[#ece9d8]">
          <Svg className="size-3"><path d="M3 3l10 10M13 3L3 13" stroke="#000" strokeWidth="3" /></Svg>
        </button>
      </div>
      <p className="pl-[15px] leading-[18px] whitespace-nowrap">使软件保持最新的简单方法</p>
      <a href="#more" className="ml-[15px] leading-[18px] text-[#0000e0] underline">单击此处。</a>
      <svg viewBox="0 0 24 20" className="absolute top-[71px] left-[122px] h-5 w-6" fill="#ffffe1" stroke="#000">
        <path d="M0 .5L19.500 18.500V.5" />
        <path d="M1.500 0h17" stroke="#ffffe1" strokeWidth="2" />
      </svg>
    </aside>
  )
}

function ImeBar() {
  return (
    <div role="toolbar" aria-label="输入法" className="absolute right-[35px] bottom-[85px] flex h-[22px] w-[142px] items-center justify-between rounded-xs border border-[#b9d3ea] bg-[#f5fafe] px-px text-[#3f8fd2]">
      <Svg className="size-[18px]"><rect x="1" y="1" width="14" height="14" rx="3" fill="#2fb457" stroke="#1f9243" transform="rotate(-8 8 8)" /><path d="M11.500 4.500H7c-3 0-3 3.500 0 3.500h2c3 0 3 3.500 0 3.500H4.500" stroke="#fff" strokeWidth="2" /></Svg>
      <button className="pt-[3px] text-[15px] leading-5 font-medium">五</button>
      <Svg className="size-[14px]"><path d="M11 1c2 7-2 11-9 10 4 6 14 3 13-4 0-3-2-5-4-6z" fill="#3f8fd2" stroke="none" /></Svg>
      <button className="text-sm leading-4 font-bold">°,</button>
      <Svg className="size-[18px]"><rect x=".7" y="3" width="14.600" height="10" rx="1" stroke="#3f8fd2" strokeWidth="1.300" /><path d="M3 6h10M3 8.300h10" stroke="#3f8fd2" strokeWidth="1.400" strokeDasharray="1.500 1" /><path d="M5 11h6" stroke="#3f8fd2" strokeWidth="1.300" /></Svg>
      <Svg className="size-[15px]"><circle cx="8" cy="4.500" r="3.500" fill="#a9adb0" stroke="none" /><path d="M3 15v-3c0-4 10-4 10 0v3z" fill="#a9adb0" stroke="none" /></Svg>
      <Svg className="size-4"><path d="M2 14l7-7" stroke="#3f8fd2" strokeWidth="3" /><path d="M8 4l3-3 1 3 3 1-3 4-4-1z" fill="#3f8fd2" stroke="#3f8fd2" /></Svg>
    </div>
  )
}

const folder = <Svg><path d="M1 3h5l1 2h8l-1 9H2z" fill="#f6d568" stroke="#b98d1e" /><path d="M5 5h7v6H5z" fill="#fff" stroke="#999" /><circle cx="8" cy="10" r="3" fill="#a9d3f3" stroke="#6b89a8" /></Svg>
const plainFolder = <Svg><path d="M1 3h5l1 2h8l-1 9H2z" fill="#fae48c" stroke="#b98d1e" /><path d="M3 7h13l-2 7H2z" fill="#fbeea9" stroke="#c79c2e" /></Svg>

const tasks: { text: string; icon: ReactNode; active?: boolean }[] = [
  { text: "G:\\...", icon: folder },
  { text: "欢迎...", icon: <span className="flex size-4 shrink-0 items-center justify-center rounded-xs bg-[#2e9cf0]"><CloudMark className="size-[14px]" /></span> },
  { text: "Mic...", icon: <Svg><path d="M1 1h14v14H1z" fill="#e8f2e6" stroke="#1c6b34" /><path d="M4 4l7 8M11 4l-7 8" stroke="#1c7b3a" strokeWidth="2.500" /></Svg> },
  { text: "D:\\...", icon: folder },
  { text: "控制...", icon: <Svg><path d="M3 2l8-1v12l-8 2z" fill="#cfe3f7" stroke="#4a6c92" /><path d="M8 8l6-3M6 10l2-3" stroke="#223" strokeWidth="2" /></Svg> },
  { text: "金山...", icon: <Svg><path d="M1 1h14v14H1z" fill="#4b5a4a" stroke="none" /><circle cx="8" cy="9" r="4.500" fill="#d8edc9" stroke="#8fce6d" strokeWidth="1.500" /><path d="M8 0l3 4H9v6H7V4H5z" fill="#f39a1f" stroke="none" /></Svg> },
  { text: "C:\\...", icon: folder },
  { text: "F:\\...", icon: plainFolder },
  { text: "Aut...", icon: <CadLogo className="size-4" />, active: true },
  { text: "CAD...", icon: <Svg><circle cx="8" cy="8" r="7" fill="#3f8fe0" stroke="#dff0ff" /><path d="M4 8h8c0-5-8-5-8 0s6 5 8 2" stroke="#fff" strokeWidth="1.600" /></Svg> },
]

const launchers: { label: string; icon: ReactNode }[] = [
  { label: "浏览器", icon: <Svg><path d="M3 1h9l3 2v11H3z" fill="#eaf4ff" stroke="#5c8fc9" /><path d="M4 9h8c0-6-8-6-8 0s6 5 8 2" stroke="#2277d0" strokeWidth="1.800" /></Svg> },
  { label: "Word", icon: <Svg><path d="M1 1h14v14H1z" fill="#e7edf7" stroke="#8096bd" /><path d="M3 4l2 8 3-6 2 6 3-8" stroke="#2a4d93" strokeWidth="1.800" /></Svg> },
  { label: "QQ", icon: <Svg><ellipse cx="8" cy="9" rx="6" ry="6" fill="#111" stroke="none" /><circle cx="8" cy="4.500" r="4.500" fill="#111" stroke="none" /><ellipse cx="8" cy="11" rx="3.500" ry="3.500" fill="#fff" stroke="none" /><path d="M2 8c4 2.500 8 2.500 12 0" stroke="#e02a1c" strokeWidth="2.500" /><path d="M5 6h6l-3 1.500z" fill="#f5b21b" stroke="none" /><path d="M2 15h5M9 15h5" stroke="#f5b21b" strokeWidth="2" /><circle cx="6.500" cy="3.500" r="1.200" fill="#fff" stroke="none" /><circle cx="9.500" cy="3.500" r="1.200" fill="#fff" stroke="none" /></Svg> },
  { label: "画图", icon: <Svg><path d="M1 7c3-7 13-7 14-1 1 4-3 3-5 4-2 2-1 5-4 5-5 0-7-4-5-8z" fill="#f6d78a" stroke="#a56f1f" /><circle cx="6" cy="5" r="1.500" fill="#d22" stroke="none" /><circle cx="10" cy="5" r="1.300" fill="#27b" stroke="none" /><circle cx="4.500" cy="10" r="1.500" fill="#2a3" stroke="none" /><path d="M14 1L8 9" stroke="#d07c2a" /></Svg> },
  { label: "计算器", icon: <Svg><path d="M3 1h10v14H3z" fill="#bcd2ec" stroke="#4e719d" /><path d="M5 3h6v2H5z" fill="#fff" stroke="none" /><path d="M5 7.500h6M5 10h6M5 12.500h6" stroke="#3c5d88" strokeWidth="1.400" strokeDasharray="1.400 .8" /></Svg> },
  { label: "酷我", icon: <Svg><circle cx="8" cy="8" r="7" fill="#1484d8" stroke="#fff" strokeWidth="1.500" /><path d="M6 4v8M11 4L7 8l4 4" stroke="#fff" strokeWidth="1.800" /></Svg> },
  { label: "360 浏览器", icon: <Svg><circle cx="8" cy="8" r="7" fill="#43b53a" stroke="#c6f0b5" /><path d="M4 8h8c0-5-8-5-8 0s6 5 8 2" stroke="#fff" strokeWidth="1.800" /></Svg> },
  { label: "搜狗浏览器", icon: <Svg><circle cx="8" cy="8" r="7" fill="#3d8fd8" stroke="#e5f2fd" strokeWidth="1.500" /><path d="M11 4C5 3 4 7 8 8s3 5-3 4" stroke="#fff" strokeWidth="2" /></Svg> },
]

function Dots() {
  return <span className="mx-1 h-5 w-1 shrink-0 border-x-2 border-dotted border-[#1743a6]" />
}

function Taskbar() {
  return (
    <div className="flex h-[34px] shrink-0 items-center border-t-2 border-[#4f93f5] bg-linear-to-b from-[#3a80ee] via-[#2561dd] via-20% to-[#1f50c4] text-white">
      <button className="flex h-7 w-[101px] shrink-0 items-center gap-2 rounded-r-xl bg-linear-to-b from-[#5fae5b] via-[#3a913a] via-30% to-[#2c7a2f] pl-[10px]">
        <Svg className="size-5">
          <g stroke="none">
            <path d="M3 2c2-1 3-1 5 0L7 7C5 6 4 6 2 7z" fill="#f0562b" />
            <path d="M9 3c2 1 4 1 6 0l-1 5c-2 1-4 1-6 0z" fill="#8cc63f" />
            <path d="M2 8c2-1 3-1 5 0l-1 5c-2-1-3-1-5 0z" fill="#4a8cf0" />
            <path d="M8 9c2 1 4 1 6 0l-1 5c-2 1-4 1-6 0z" fill="#fbc926" />
          </g>
        </Svg>
        <span className="pt-[2px] text-xl leading-6 italic [text-shadow:1px_1px_2px_#1b4d1c]">开始</span>
      </button>
      <span className="w-1" />
      <Dots />
      <div className="flex items-center pl-[2px]">
        {launchers.map((l) => (
          <button key={l.label} aria-label={l.label} className="flex w-[23px] justify-center">{l.icon}</button>
        ))}
      </div>
      <button aria-label="更多" className="ml-5 w-[22px] pb-2 text-sm leading-4">»</button>
      <Dots />
      <div className="flex min-w-0 flex-1 gap-[2px]">
        {tasks.map((t, i) => (
          <button
            key={i}
            className={`flex h-6 min-w-0 flex-1 items-center gap-[3px] overflow-hidden rounded-xs border pl-[7px] text-sm whitespace-nowrap ${t.active ? "border-[#153f9c] bg-[#1d4fb8]" : "border-[#5a97fa] border-b-[#2257c8] bg-[#3c7ff3]"}`}
          >
            {t.icon}
            <span className="pt-px">
              <Mixed text={t.text} latin="text-xs" />
            </span>
          </button>
        ))}
      </div>
      <span className="w-1" />
      <Dots />
      <Svg className="ml-1 size-[15px]"><path d="M0 0h16v16H0z" fill="#2fb457" stroke="none" /><path d="M13 4H6c-3 0-3 4 0 4h3c4 0 4 4 0 4H3" stroke="#fff" strokeWidth="2.500" /></Svg>
      <div className="ml-3 flex h-full items-center border-l border-[#0b6bc4] bg-linear-to-b from-[#2ba6f5] via-[#1592ec] via-20% to-[#1182d8] pr-[13px]">
        <button aria-label="显示隐藏的图标" className="-ml-2 flex size-[17px] items-center justify-center rounded-full border border-[#9fc6f5] bg-[#2a7fe0]">
          <Svg className="size-3"><path d="M10 3L5 8l5 5" stroke="#fff" strokeWidth="2.500" /></Svg>
        </button>
        <span className="ml-[2px] flex w-4 justify-center bg-[#2e8de0]"><CloudMark className="size-[15px]" /></span>
        <Svg className="ml-[2px] size-4"><path d="M8 1l6 2c0 6-2 10-6 12C4 13 2 9 2 3z" fill="#d8242c" stroke="#ffd0d0" /><path d="M5.500 5l5 5M10.500 5l-5 5" stroke="#fff" strokeWidth="1.800" /></Svg>
        <Svg className="ml-[2px] size-4"><path d="M0 0h16v16H0z" fill="#1a65c4" stroke="none" /><path d="M1 7c2-3 4-1 4 2 0 4 7 5 7-5M9 5l3-3 3 3" stroke="#fff" strokeWidth="2" /></Svg>
        <time className="ml-2 text-xs leading-4">13:31</time>
      </div>
    </div>
  )
}

export default function App() {
  return (
    <div className="relative flex h-screen min-h-[640px] flex-col overflow-hidden bg-[#f3f6fd] font-['Liberation_Mono','Noto_Sans_CJK_SC',monospace]">
      <div className="mx-[3px] mt-[3px] flex min-h-0 flex-1 flex-col overflow-hidden rounded-t-lg border-x-[3px] border-b-[3px] border-[#0a3fd8] bg-[#ece9d8]">
        <TitleBar />
        <MenuBar />
        <TopToolbars />
        <div className="flex min-h-0 flex-1">
          <div className="w-[26px] shrink-0">
            <div className="border-t border-r border-b border-t-white border-r-[#aca899] border-b-[#aca899]">
              <GripH />
              <Tools vertical items={drawTools} />
              <div className="h-1" />
            </div>
          </div>
          <div className="flex min-w-0 flex-1 flex-col border-t-2 border-l-2 border-t-[#716f64] border-l-[#8b887a]">
            <Canvas />
            <SheetTabs />
          </div>
          <div className="w-7 shrink-0 border-l border-white pr-px pl-px">
            <div className="border-t border-r border-b border-t-white border-r-[#aca899] border-b-[#aca899]">
              <GripH />
              <Tools vertical items={modifyTools} />
              <div className="h-1" />
            </div>
            <div className="border-t border-r border-b border-t-white border-r-[#aca899] border-b-[#aca899]">
              <GripH />
              <Tools vertical items={orderTools} />
              <div className="h-1" />
            </div>
          </div>
        </div>
        <CommandLine />
        <StatusBar />
      </div>
      <Taskbar />
      <Balloon />
      <ImeBar />
      <span className="absolute top-[209px] -right-9 size-[46px] rounded-full bg-[#27c427]" />
    </div>
  )
}
